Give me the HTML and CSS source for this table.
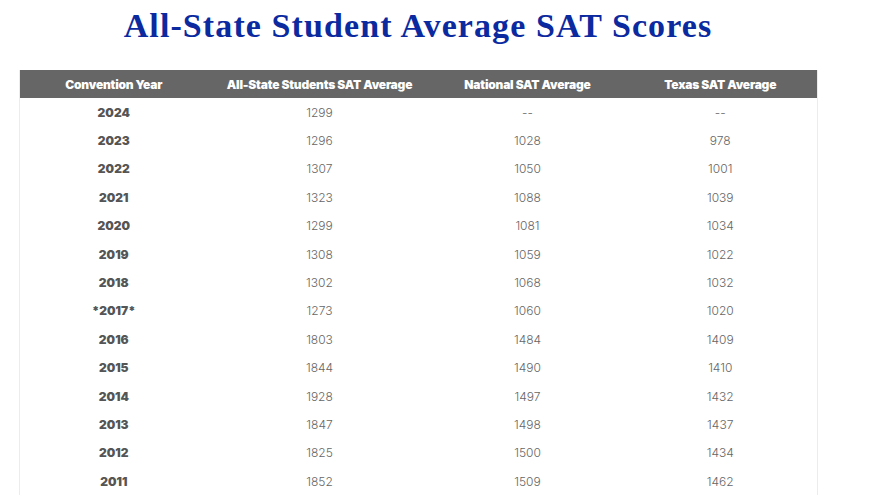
FILE: index.html
```html
<!DOCTYPE html>
<html>
<head>
<meta charset="utf-8">
<link rel="stylesheet" href="styles.css">
</head>
<body>
<div class="page">
  <h1 class="title">All-State Student Average SAT Scores</h1>
  <table class="scores">
    <colgroup>
      <col class="c1"><col class="c2"><col class="c3"><col class="c4">
    </colgroup>
    <thead>
      <tr><th>Convention Year</th><th>All-State Students SAT Average</th><th>National SAT Average</th><th>Texas SAT Average</th></tr>
    </thead>
    <tbody>
      <tr><td class="yr">2024</td><td>1299</td><td>--</td><td>--</td></tr>
      <tr><td class="yr">2023</td><td>1296</td><td>1028</td><td>978</td></tr>
      <tr><td class="yr">2022</td><td>1307</td><td>1050</td><td>1001</td></tr>
      <tr><td class="yr">2021</td><td>1323</td><td>1088</td><td>1039</td></tr>
      <tr><td class="yr">2020</td><td>1299</td><td>1081</td><td>1034</td></tr>
      <tr><td class="yr">2019</td><td>1308</td><td>1059</td><td>1022</td></tr>
      <tr><td class="yr">2018</td><td>1302</td><td>1068</td><td>1032</td></tr>
      <tr><td class="yr">*2017*</td><td>1273</td><td>1060</td><td>1020</td></tr>
      <tr><td class="yr">2016</td><td>1803</td><td>1484</td><td>1409</td></tr>
      <tr><td class="yr">2015</td><td>1844</td><td>1490</td><td>1410</td></tr>
      <tr><td class="yr">2014</td><td>1928</td><td>1497</td><td>1432</td></tr>
      <tr><td class="yr">2013</td><td>1847</td><td>1498</td><td>1437</td></tr>
      <tr><td class="yr">2012</td><td>1825</td><td>1500</td><td>1434</td></tr>
      <tr><td class="yr">2011</td><td>1852</td><td>1509</td><td>1462</td></tr>
    </tbody>
  </table>
</div>
</body>
</html>
```
FILE: styles.css
```css
html, body {
  margin: 0;
  padding: 0;
  background: #ffffff;
}
.page {
  width: 798px;
  margin: 0 0 0 19px;
  padding-top: 6px;
}
.title {
  margin: 0 0 24px 0;
  font-family: "Liberation Serif", "DejaVu Serif", serif;
  font-weight: bold;
  font-size: 34px;
  line-height: 40px;
  letter-spacing: 1.1px;
  color: #0b2a9f;
  text-align: center;
}
.scores {
  width: 798px;
  border-collapse: collapse;
  table-layout: fixed;
  border-left: 1px solid #ececec;
  border-right: 1px solid #ececec;
}
.c1 { width: 188px; }
.c2 { width: 224px; }
.c3 { width: 192px; }
.c4 { width: 194px; }
.scores th {
  background: #666666;
  color: #ffffff;
  font-family: "Inter", "Roboto", sans-serif;
  font-weight: 900;
  font-size: 12px;
  letter-spacing: -0.2px;
  height: 28px;
  padding: 0;
  text-align: center;
}
.scores td {
  font-family: "Inter", "Open Sans", sans-serif;
  font-weight: 300;
  font-size: 12px;
  color: #666666;
  height: 28.4px;
  padding: 0;
  text-align: center;
}
.scores td.yr {
  font-weight: 900;
  color: #555555;
}
```
